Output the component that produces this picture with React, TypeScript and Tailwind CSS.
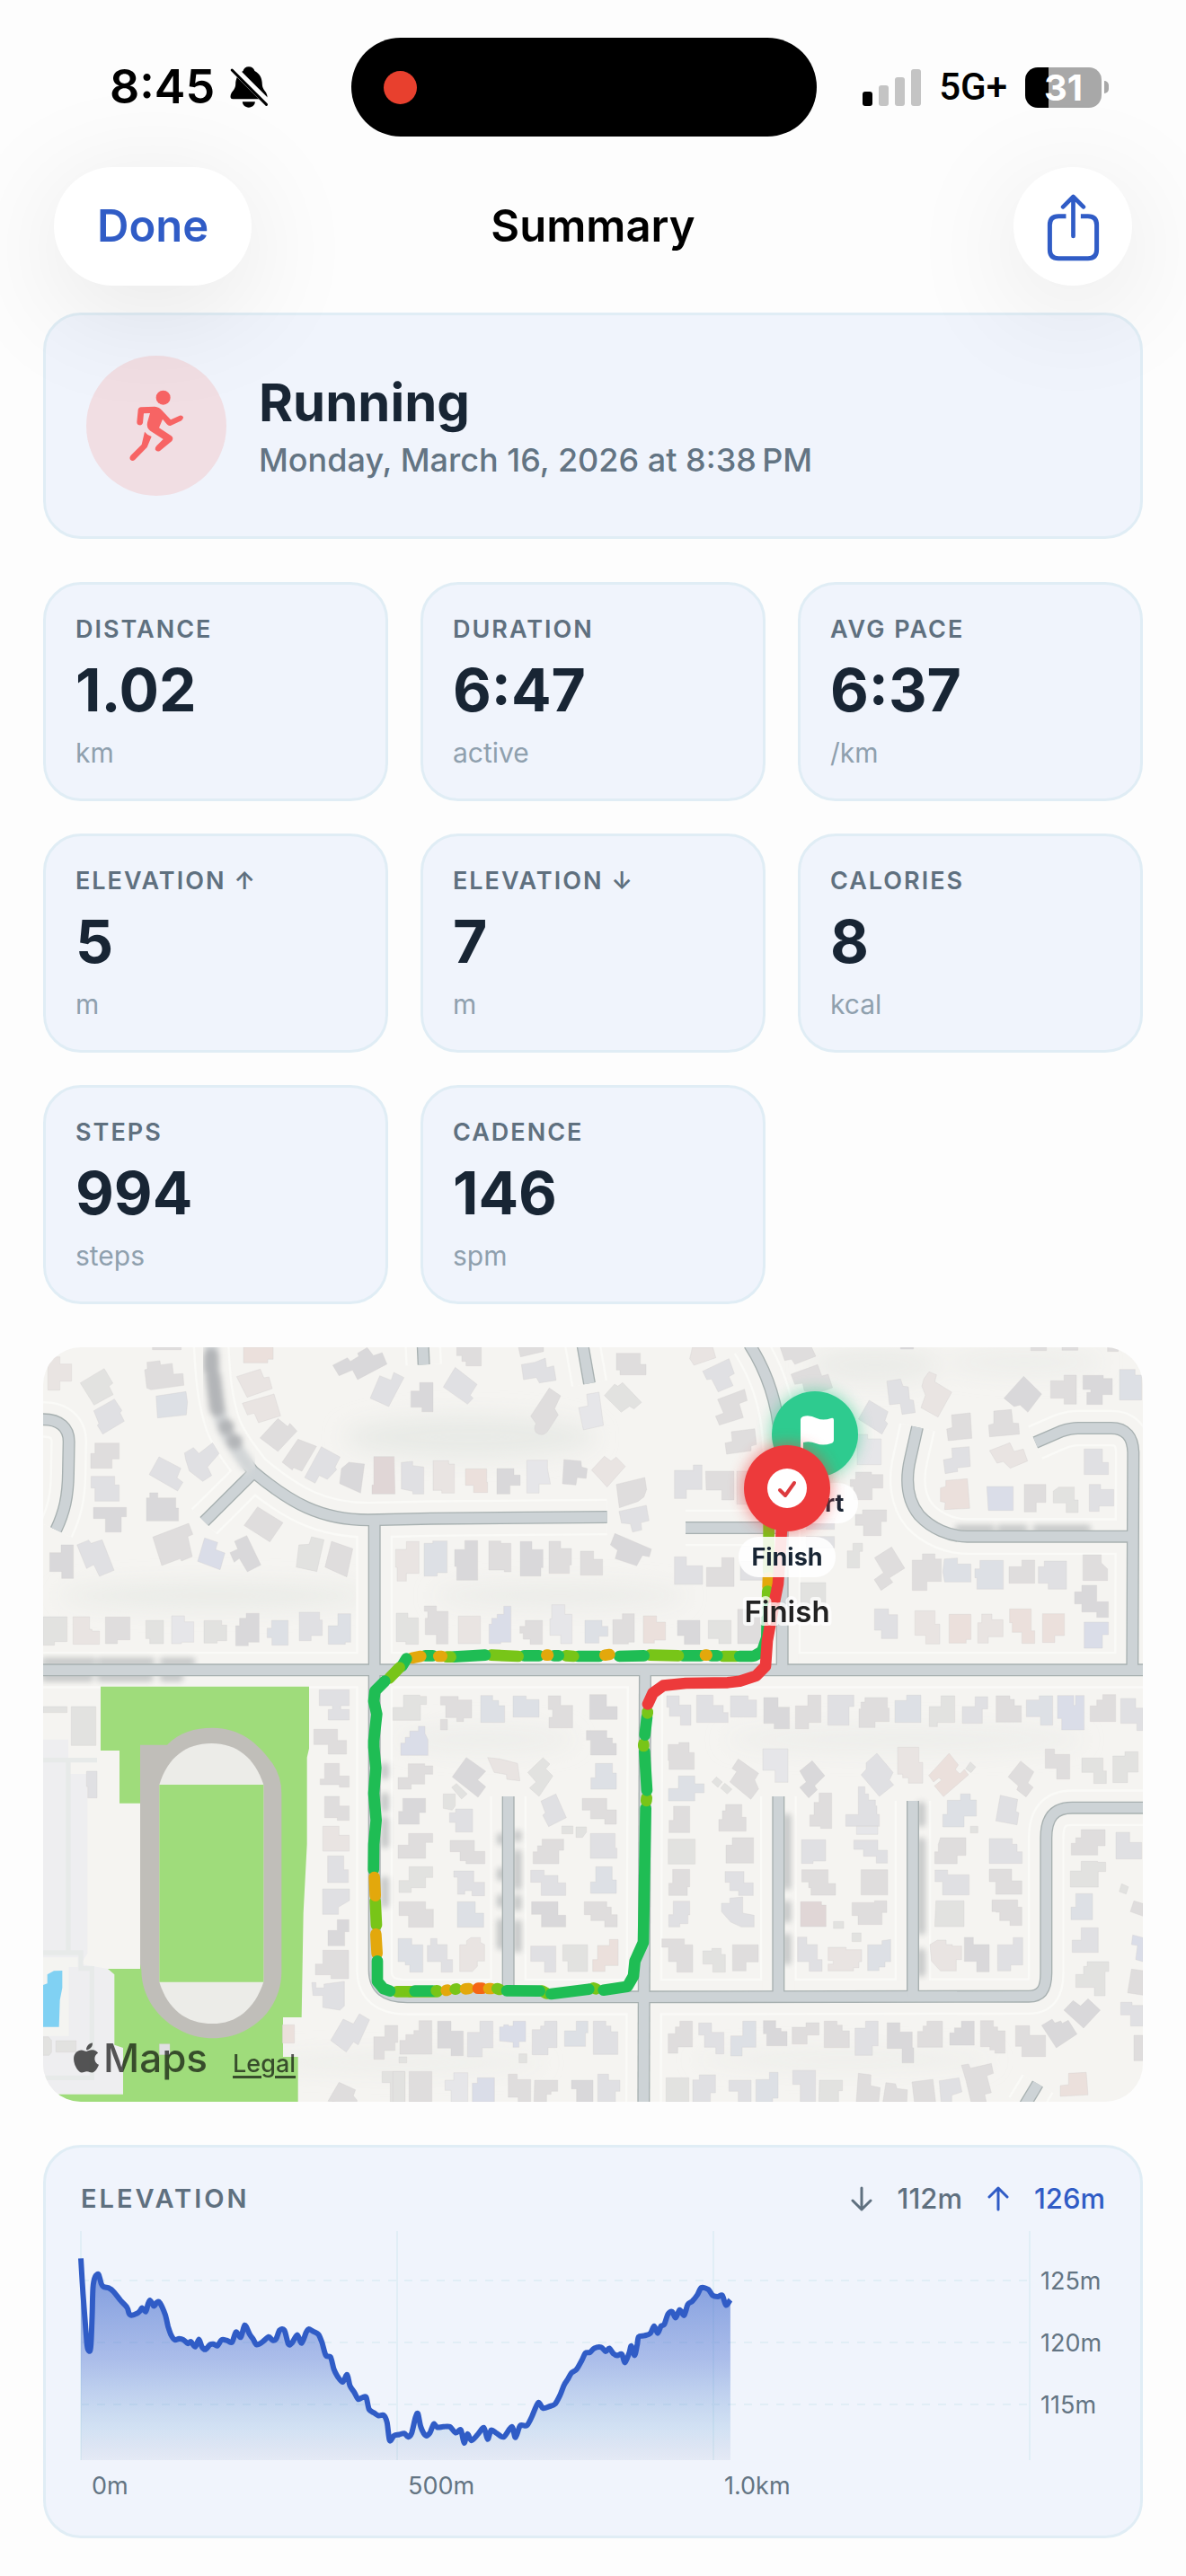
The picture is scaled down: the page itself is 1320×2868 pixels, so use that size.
import React from "react";
import { FaApple } from "react-icons/fa";

/* ---------- Icons ---------- */

function BellSlashIcon() {
  return (
    <svg viewBox="518 42 134 144" className="h-12 w-[45px]" aria-hidden="true">
      <path
        d="M583 46c10 0 17 5 20 14 17 9 25 24 25 45 0 18 16 24 17 40 0 6-3 9-8 9H530c-6 0-8-3-8-9 1-16 17-22 17-40 0-21 9-36 25-45 3-9 9-14 19-14z"
        fill="#000"
      />
      <path d="M562 163h42c0 11-9 19-21 19s-21-8-21-19z" fill="#000" />
      <path d="M530 50L650 170" stroke="#fdfdfd" strokeWidth="24" />
      <path d="M527 57L642 172" stroke="#000" strokeWidth="9" strokeLinecap="round" />
    </svg>
  );
}

function SignalIcon() {
  return (
    <svg viewBox="0 0 65 42" className="h-[42px] w-[65px]" aria-hidden="true">
      <rect x="0" y="26" width="11" height="16" rx="3" fill="#000" />
      <rect x="18" y="19" width="11" height="23" rx="3" fill="#c4c4c4" />
      <rect x="36" y="10" width="11" height="32" rx="3" fill="#c4c4c4" />
      <rect x="54" y="1" width="11" height="41" rx="3" fill="#c4c4c4" />
    </svg>
  );
}

function ShareIcon() {
  return (
    <svg viewBox="850 552 182 236" className="h-[79px] w-[61px]" fill="none" stroke="#305cc6" aria-hidden="true">
      <path d="M917 635H892Q863 635 863 664V746Q863 775 892 775H990Q1019 775 1019 746V664Q1019 635 990 635H966" strokeWidth="15" />
      <path d="M941 572V701M907 604L941 570L975 604" strokeWidth="14" strokeLinecap="round" strokeLinejoin="round" />
    </svg>
  );
}

function RunnerIcon() {
  return (
    <svg viewBox="190 1120 189 246" className="h-[82px] w-[63px]" fill="#f76464" aria-hidden="true">
      <circle cx="306" cy="1149" r="24" />
      <path d="M232 1181L278 1179Q292 1180 302 1192L331 1223L361 1209Q369 1207 373 1214Q374 1221 367 1226L332 1242Q324 1245 318 1238L304 1221L292 1250L333 1277Q342 1284 335 1294L295 1327Q284 1332 279 1322Q278 1316 284 1310L306 1288L263 1260Q249 1250 253 1232L262 1201L241 1202L238 1234Q235 1243 226 1241Q218 1240 218 1230L222 1190Q223 1182 232 1181Z" />
      <path d="M244 1263Q252 1274 267 1279L252 1315L211 1357Q203 1363 196 1356Q192 1349 198 1342L234 1306Z" />
    </svg>
  );
}

function RangeArrow({ up }: { up?: boolean }) {
  return (
    <svg
      viewBox="0 0 24 28"
      className="h-7 w-6"
      fill="none"
      stroke="currentColor"
      strokeWidth="3"
      strokeLinecap="round"
      strokeLinejoin="round"
      aria-hidden="true"
    >
      {up ? <path d="M12 26V2M2 12L12 2L22 12" /> : <path d="M12 2V26M2 16L12 26L22 16" />}
    </svg>
  );
}

/* ---------- Header ---------- */

function StatusBar() {
  return (
    <div className="flex items-center justify-between pt-[42px] pr-[86px] pl-[122px]">
      <div className="flex w-[218px] items-center gap-4">
        <span className="text-[52px] leading-[60px] font-semibold text-black">8:45</span>
        <BellSlashIcon />
      </div>
      <div className="flex h-[110px] w-[518px] items-center rounded-full bg-black pl-9">
        <span className="h-[37px] w-[37px] rounded-full bg-[#e8402e]" />
      </div>
      <div className="flex items-center">
        <SignalIcon />
        <span className="ml-5 font-[Roboto] text-[42px] leading-[48px] font-medium text-black">5G+</span>
        <div className="ml-5 flex h-[45px] w-[85px] items-center justify-center rounded-[14px] bg-[linear-gradient(to_right,#000_31%,#a8a8a8_31%)]">
          <span className="text-[40px] leading-[45px] font-bold text-white">31</span>
        </div>
        <span className="ml-[3px] h-[14px] w-[5px] rounded-r-full bg-[#a8a8a8]" />
      </div>
    </div>
  );
}

function Header() {
  return (
    <header className="relative z-10">
      <StatusBar />
      <nav className="mt-[34px] flex items-center justify-between px-[60px]">
        <div className="flex flex-1">
          <button
            type="button"
            className="h-[132px] rounded-full bg-white px-12 text-[49px] leading-[60px] font-semibold text-[#305cc6] shadow-[0_24px_130px_rgba(0,0,0,0.10)]"
          >
            Done
          </button>
        </div>
        <h1 className="text-[49px] leading-[60px] font-semibold text-black">Summary</h1>
        <div className="flex flex-1 justify-end">
          <button
            type="button"
            aria-label="Share"
            className="flex h-[132px] w-[132px] items-center justify-center rounded-full bg-white shadow-[0_24px_130px_rgba(0,0,0,0.10)]"
          >
            <ShareIcon />
          </button>
        </div>
      </nav>
    </header>
  );
}

/* ---------- Stats ---------- */

const CARD = "border-[3px] border-[#e0edf5] bg-[#f0f4fc]";

function ActivityCard() {
  return (
    <section className={`${CARD} flex items-center gap-9 rounded-[42px] p-[45px]`}>
      <div className="flex h-[156px] w-[156px] shrink-0 items-center justify-center rounded-full bg-[#f1dee3]">
        <RunnerIcon />
      </div>
      <div>
        <h2 className="text-[58px] leading-[72px] font-bold text-[#182534]">Running</h2>
        <p className="mt-1 text-[36px] leading-[48px] font-medium text-[#637483]">Monday, March 16, 2026 at 8:38{"\u202f"}PM</p>
      </div>
    </section>
  );
}

const STATS = [
  { label: "DISTANCE", value: "1.02", unit: "km" },
  { label: "DURATION", value: "6:47", unit: "active" },
  { label: "AVG PACE", value: "6:37", unit: "/km" },
  { label: "ELEVATION ↑", value: "5", unit: "m" },
  { label: "ELEVATION ↓", value: "7", unit: "m" },
  { label: "CALORIES", value: "8", unit: "kcal" },
  { label: "STEPS", value: "994", unit: "steps" },
  { label: "CADENCE", value: "146", unit: "spm" },
];

function StatGrid() {
  return (
    <dl className="grid grid-cols-3 gap-9">
      {STATS.map((s) => (
        <div key={s.label} className={`${CARD} rounded-[42px] px-[33px] pt-8 pb-[31px]`}>
          <dt className="text-[27px] leading-[36px] font-semibold tracking-[2px] text-[#5f707f]">{s.label}</dt>
          <dd className="mt-[9px] text-[66px] leading-[80px] font-bold text-[#182534]">{s.value}</dd>
          <dd className="mt-[10px] text-[30px] leading-[40px] text-[#8fa0ae]">{s.unit}</dd>
        </div>
      ))}
    </dl>
  );
}

/* ---------- Map ---------- */

const TINT: Record<string, string> = {
  g: "#dfdddd",
  l: "#e0e0e3",
  d: "#d9d8da",
  e: "#e2e2e0",
  p: "#e9e4e2",
  b: "#dde0e5",
  v: "#dadde8",
  w: "#e6e6e9",
  r: "#ebe0dc",
  k: "#e0d6d6",
};

/* Building footprints, grouped by map tile: "<tint><path>". */
const TILES: { x: number; y: number; houses: string[] }[] = [
  {
    x: 0,
    y: 0,
    houses: [
      "pM40,62H80V86H119V143H80V173H40Z",
      "eM148,149L228,101L257,150L244,160L258,188L194,223Z",
      "lM193,242L262,203L287,241L281,249L295,277L223,320L205,291L210,284Z",
      "gM371,80L414,75L416,89L455,84L459,120L491,118L494,157L384,172L370,166L363,105L372,103Z",
      "bM401,193L501,178L506,214L502,256L406,266Z",
      "gM389,30H485V38H389Z",
      "rM693,30H792V70H774V82H693Z",
      "pM670,128L749,103L761,132L778,129L789,168L705,197Z",
      "pM689,217L795,186L817,259L743,282L729,250L706,256Z",
      "gM748,333L808,268L841,295L848,284L872,310L808,378Z",
      "gM822,414L875,337L937,361L888,444L860,432L856,440Z",
      "lM897,465L953,362L1016,397L999,430L1004,439L973,471L946,458L932,484Z",
      "dM1020,435L1045,414L1097,420L1084,517L1014,485Z",
      "kM1128,395H1196L1199,520H1122V490H1128Z",
      "lM1220,415L1258,411V425L1295,430V520H1258V511L1220,503Z",
      "dM991,90L1040,65L1050,77L1078,60L1074,50L1106,31L1127,58L1156,48L1172,86L1074,138L1057,106L1012,125Z",
      "lM1116,200L1148,125L1186,140L1195,114L1229,131L1178,228Z",
      "gM197,350H278V403H254V434H183V385H197Z",
      "lM184,461H263V490H278V544H197V500H184Z",
      "dM192,565H302V596H285V647H232V602H192Z",
      "lM378,455L411,396L484,434L471,466L491,481L473,510Z",
      "lM496,383L526,365L544,385L590,349L612,385L573,430L587,458L557,478L512,443L500,405Z",
      "dM369,533H380V516H407V533H467V567H476V610H369Z",
      "gM390,664L510,618L524,655L507,662L522,729L486,744L482,736L420,759Z",
      "vM563,667L607,682L600,706L631,717L615,773L540,745Z",
      "dM648,716L674,704L663,678L704,659L751,757L706,780L679,735L662,748Z",
      "gM740,563L825,616L781,680L695,625Z",
      "lM137,690L176,674L184,685L221,673L261,775L212,795L193,756L169,769Z",
      "dM46,716H84V690H125V802H86V779H46Z",
      "eM878,690L912,688L920,663L962,673L938,779L869,764Z",
      "gM987,678L1058,703L1038,797L965,764Z",
      "eM24,930H104V1013H62V1025H24Z",
      "pM124,930H179V972H187V978H212V1022H124Z",
      "gM232,931H314V1007H272V1020H232Z",
      "eM367,942H426V1020H380V1003H367Z",
      "wM453,927H496V947H527V1015H486V1020H453Z",
      "eM561,943H620V958H637V1010H605V1018H561Z",
      "dM667,960H680V935H702V919H745V1015H709V1027H667Z",
      "bM772,968H787V942H842V1025H788V1000H772Z",
      "lM879,915H947V941H956V993H919V1010H879Z",
      "bM976,960H1008V920H1051V1015H1033V1022H976Z",
      "pM1201,705H1237V679H1279V785H1237V811H1206V765H1201Z",
      "eM24,1230H104V1250H24Z",
      "eM118,1230H200V1360H118Z",
      "lM946,1174H1046V1227H1018V1240H1046V1275H976V1240H990V1227H946Z",
    ],
  },
  {
    x: 1200,
    y: 0,
    houses: [
      "gM205,30H287V92H236V77H222V58H205Z",
      "dM52,176H81V148H126V245H89V230H52Z",
      "lM160,163L200,97L273,154L250,190L260,200L241,220Z",
      "gM411,30H495V44L418,62Z",
      "lM421,88L466,80L501,66L505,98L529,92L537,140L481,149L471,131L428,138Z",
      "gM514,166L552,192L532,235L544,256L507,313Q490,330 470,315Q460,300 470,285L452,260Z",
      "wM612,232L643,226L639,187L680,180L695,291L628,306Z",
      "eM698,191L732,153L743,160L759,148L822,214L797,236L782,227L754,247Z",
      "gM738,50H818V87H837V122H750V106H738Z",
      "pM983,68L992,30H1060L1070,65L997,90Z",
      "lM1026,110L1114,68L1132,118L1114,128L1128,158L1078,179L1056,136L1040,138Z",
      "gM1076,204L1166,170L1175,208L1148,218L1162,265L1082,290L1069,260L1096,250Z",
      "gM1101,350L1125,345L1122,312L1200,302L1206,355L1188,360V376L1106,387Z",
      "pM126,409H178V420H197V517H155V508H126Z",
      "rM234,436H305V481H308V515H261V491H234Z",
      "dM339,435H396V457H417V491H383V520H339Z",
      "wM439,407H508V435L518,487H480V517H439Z",
      "dM563,405L620,410L622,430L641,435L637,468L607,465L603,490L558,486Z",
      "pM655,440L698,394L720,410L738,397L768,428L707,497L683,470Z",
      "gM738,488L833,465L839,505L830,530L810,545L748,566Z",
      "lM747,578L838,558L847,609L820,616L823,640L792,647L785,620L755,617Z",
      "dM733,652L855,704L848,730L825,725L806,760L734,736L742,708L718,690Z",
      "lM932,441H995V423H1024V505H972V535H932Z",
      "gM1036,444H1131V540H1090V507H1038Z",
      "pM1140,444H1200V554H1140Z",
      "bM96,685H125V677H173V783H140V794H96Z",
      "dM198,706H232V676H275V808H205V762H198Z",
      "gM312,677H352V685H386V780H364V774H312Z",
      "dM417,679H456V706H493V766H486V794H417Z",
      "gM513,678H552V702H588V757H581V785H513Z",
      "gM618,711H662V738H692V791H618Z",
      "eM3,918H42V934H77V1022H35V1013H3Z",
      "gM97,894H137V912H176V1021H137V990H100V935H108V912H97Z",
      "pM210,928H284V1020H210Z",
      "vM313,955H322V935H340V922H362V895H386V1015H352V1020H313Z",
      "gM416,962H434V942H491V1022H450V1005H427V985H416Z",
      "wM522,890H566V922H590V1020H552V992H516V937H522Z",
      "bM633,942H690V962H710V995H680V1018H633Z",
      "gM726,940H758V920H798V1015H778V1021H726Z",
      "rM828,927H872V948H902V1008H865V1018H828Z",
      "dM942,942H1017V1022H965V993H942Z",
      "eM1045,942H1121V1020H1080V1003H1045Z",
      "gM1143,905H1225V1020H1143Z",
      "lM932,730H972V760H1026V822H932Z",
      "gM1039,765H1090V733H1131V829H1039Z",
      "lM1152,745H1235V808H1152Z",
      "eM27,1192H82V1196H104V1223H84V1276H-8V1233H27Z",
      "gM151,1196H210V1208H255V1268H228V1280H205V1267H168V1225H151Z",
      "gM151,1273H174V1308H151Z",
      "bM285,1193H325V1210H345V1227H365V1283H285Z",
      "bM393,1195H437V1207H480V1265H393Z",
      "gM511,1194H552V1226H592V1301H513V1266H525V1240H511Z",
      "dM649,1190H705V1230H741V1273H649Z",
      "lM906,1194H948V1225H987V1292H952V1262H915V1232H906Z",
      "lM1006,1192H1061V1226H1095V1250H1111V1283H1006Z",
      "lM1119,1194H1178V1208H1206V1265H1119Z",
      "dM1230,1200H1278V1232H1316V1304H1265V1286H1230Z",
    ],
  },
  {
    x: 2430,
    y: 0,
    houses: [
      "gM106,1228H147V1192H191V1283H150V1304H106Z",
      "lM214,1192H301V1230H285V1292H214Z",
      "gM325,1215H338V1200H413V1235H419V1280H372V1300H318V1238H325Z",
      "bM438,1210H477V1192H525V1283H438Z",
      "eM553,1230H592V1194H638V1283H580V1297H553Z",
      "lM663,1230H706V1197H748V1238H730V1286H663Z",
      "gM776,1194H822V1206H837V1227H860V1282H776Z",
      "bM877,1208H920V1194H965V1292H924V1264H877Z",
      "vM981,1193H1035V1226H1041V1193H1070V1308H995V1270H981Z",
      "gM1090,1228H1112V1208H1132V1190H1175V1280H1090Z",
      "lM1192,1203H1242V1235H1266V1310H1246V1286H1192Z",
      "gM55,30H160L174,60L104,87L93,70L70,74Z",
      "gM91,120L180,88L194,126L215,120L230,165L160,190L135,175L130,150L104,154Z",
      "lM352,207L415,245L405,275L414,285L395,320L316,270Z",
      "wM312,321H347V336H392V422H312Z",
      "gM289,472H307V447H360V455H398V500H362V539H300V495H289Z",
      "gM306,588H330V573H410V612H392V659H333V625H306Z",
      "eM298,685H330V712H320V767H279V710H298Z",
      "gM370,733L427,697L471,768L420,800L431,815L392,842L369,806L400,783Z",
      "eM123,816H207V900H123Z",
      "lM411,143L457,136L465,160L483,162L487,205L500,207L506,248L462,254L456,218L420,222Z",
      "pM535,135L552,112L577,122L571,145L628,180L582,263L525,232L540,190L528,160Z",
      "gM627,256L690,249L695,334L616,342L611,303L630,298Z",
      "lM628,367L686,362L690,428L646,433L648,445L606,452L600,406L630,400Z",
      "rM608,475L680,469L688,568L604,572L606,548L590,545V500L608,495Z",
      "dM868,127L928,186L882,247L856,223L836,228L802,200Z",
      "gM768,243L827,238L832,283L851,284L854,320L754,329L751,290L768,285Z",
      "pM754,375L822,349L836,378L867,370L881,410L823,434L800,412L779,417Z",
      "gM958,142H1003V123H1044V220H1003V200H958Z",
      "dM1066,124H1134V134H1164V188H1131V221H1079V181H1092V171H1066Z",
      "bM1188,104H1240V123H1262V206H1188Z",
      "lM1070,370H1131V415H1151V455H1070Z",
      "vM745,495H833V575H750Z",
      "gM870,488H942V548H910V580H870Z",
      "eM967,510L985,497H1037V540H1050V582H1010V550H967Z",
      "lM1087,488H1125V505H1169V560H1120V578H1087Z",
      "gM496,741H530V720H572V737H593V812H545V842H496Z",
      "bM603,737L647,734V754H692V814H604L598,780Z",
      "bM705,770H722V742H800V838H712V800H705Z",
      "gM819,763H862V741H905V818H819Z",
      "lM917,763H937V744H1011V838H950V818H917Z",
      "gM1066,723H1127V750L1148,770V809H1066Z",
      "dM1062,825H1112V880H1151V932H1112V914H1062V887H1038V847H1062Z",
      "lM370,904H417V923H447V1003H393V975H370Z",
      "pM505,910H572V955H588V1021H541V992H505Z",
      "rM619,922H692V1006H676V1018H619Z",
      "pM728,921H762V940H799V997H750V1018H715V950H728Z",
      "rM821,904H893V977H905V1019H862V982H830V950H821Z",
      "rM931,920H1004V993H972V1016H931Z",
      "vM1070,948H1151V990H1131V1035H1070Z",
      "gM892,30H944V41H892Z",
      "gM996,30H1049V40H996Z",
      "gM1148,30H1184V44H1148Z",
      "dM457,30H500V36H457Z",
      "lM142,600H236V638H142Z",
      "lM142,662H236V700H142Z",
    ],
  },
  {
    x: 0,
    y: 1260,
    houses: [
      "gM928,46H1007V83H1037V129H976V97H928Z",
      "gM964,160H1013V202H1046V239H1013V231H949V212H964Z",
      "gM964,270H1013V302H1046V350H1006V341H964Z",
      "pM958,370H1012V400H1046V453H958Z",
      "lM974,469H1028V515H1043V558H974Z",
      "lM957,579H1047V618L1010,640V664H957Z",
      "dM1006,682H1045V722H1031V769H975V718H1006Z",
      "gM958,784H1044V879H985V866H933V830H958Z",
      "lM921,892H935V910H962V897L1030,888V970L1015,984L958,975V935H925Z",
      "lM1026,1014L1060,1030L1080,996L1114,1016L1076,1100L1060,1090L1036,1124L984,1085Z",
      "gM1012,1225L1067,1250L1060,1270L1072,1285V1300L975,1288Z",
      "gM1165,1035H1208V1092H1199V1119H1163V1148H1128V1073H1165Z",
      "eM1156,1189H1232V1290H1183V1226H1156Z",
      "rM823,1033H863V1094H823Z",
      "lM169,186H204V275H173V237H169Z",
      "eM24,1073L42,1073L52,1085V1125L44,1135H24Z",
      "eM67,1086H134V1124H67Z",
      "lM412,1097H447V1133H412Z",
    ],
  },
  {
    x: 1200,
    y: 1260,
    houses: [
      "vM18,92H33V73H48V52H77V36H99V60L109,80V133H18Z",
      "gM43,161H98V168H125V196H98V229H53V246H9V207H43Z",
      "dM25,277H101V324H80V363H11V320H25Z",
      "gM44,394H125V424H101V477H9V433H44Z",
      "eM46,505H125V541H101V575H53V591H12V551H46Z",
      "gM12,622H101V647H127V707H44V668H12Z",
      "bM9,745H55V766H92V857H48V833H33V822H9Z",
      "lM118,745H139V765H173V815H191V857H153V822H107V768H118Z",
      "pM238,752L252,742H284V758L298,765V820H274V838L257,855H215V766H238Z",
      "dM190,205L237,140L302,186L275,215L302,238L276,273Z",
      "pM308,140L350,145L408,160L416,218L372,213L371,197L330,190Z",
      "eM442,190L493,141L516,162L502,178L526,202L480,270L448,242L470,222Z",
      "lM486,286L536,262L571,341L512,371L492,333L501,325Z",
      "eM188,240L204,227L240,262L221,279Z",
      "eM160,262H200V302L190,316L160,310Z",
      "lM201,312H258V389H201V357H181V325H201Z",
      "gM183,417H264V454H299V495H236V485H216V455H183Z",
      "lM195,519H262V557H298V602H256V585H232V597H208V540H195Z",
      "bM207,622H267V660H295V707H207Z",
      "eM556,369H593V395H556Z",
      "eM603,372H638V390L625,407H603Z",
      "gM490,413H562V450H546V495H460V455H475V435H490Z",
      "lM452,517H497V534H543V559H569V601H487V557H452Z",
      "dM455,622H543V667H569V706H488V664H455Z",
      "lM452,770H536V857H498V821H452Z",
      "eM559,766H642V855H576V820H559Z",
      "rM715,748H744V835H700V855H659V815H675V768H715Z",
      "dM638,50H706V75H725V93H738V132H652V82H638Z",
      "bM668,160H725V192H738V246H653V208H668Z",
      "gM624,277H706V315H738V363H699V345H652V316H624Z",
      "lM651,394H734V443H740V477H651Z",
      "bM669,505H724V549H738V594H652V556H669Z",
      "gM631,622H706V640H721V665H741V706H699V685H653V665H631Z",
      "gM911,97H947V90H981V124H998V180H914V150H911Z",
      "bM945,202H1000V228H1031V258H1000V285H912V244H945Z",
      "gM929,303H983V391H914V350H929Z",
      "eM911,413H1001V496H911Z",
      "gM926,514H983V572H975V601H913V560H926Z",
      "lM928,620H983V666H977V695H950V706H913V665H928Z",
      "gM890,746H965V766H993V857H940V822H912V774H890Z",
      "eM1057,778H1088V798H1102V857H1060V830H1027V786H1057Z",
      "gM1126,766H1212V823H1171V853H1126Z",
      "wM1227,111H1311V223H1268V183H1227Z",
      "gM1145,145L1213,193L1200,215L1213,245L1187,280L1117,222L1140,187L1124,177Z",
      "eM1072,205L1092,222L1077,240L1057,222Z",
      "eM1100,226L1124,246L1108,262L1086,242Z",
      "gM1103,297H1157V340H1171V386H1080V347H1092V318H1103Z",
      "gM1125,408H1196V493H1104V433H1125Z",
      "lM1101,521H1164V559H1195V601H1146V585H1117V557H1101Z",
      "lM1117,610L1160,606V660L1198,667V706H1155L1120,690L1089,655V627H1117Z",
      "gM79,1019H122V1131H15V1085H35V1066H62V1052H79Z",
      "dM141,1021H186V1054H227V1136H186V1111H141Z",
      "lM282,1021H326V1110H290V1140H241V1058H282Z",
      "vM348,1040H362V1033H378V1037H393V1021H435V1089H413V1108H393V1091L348,1087Z",
      "lM498,1021H540V1109H510V1133H457V1049H485V1037H498Z",
      "bM604,1021H643V1060H635V1105H565V1053H604Z",
      "lM661,1021H703V1037H720V1056H743V1132H661Z",
      "eM413,1130H439V1160H413Z",
      "eM12,1140H38V1160H12Z",
      "gM46,1189H122V1290H46Z",
      "eM-8,1189H32V1290H-8Z",
      "wM195,1193H242V1290H186V1252H166V1218H195Z",
      "vM274,1210H331V1290H257V1228H274Z",
      "gM377,1198H407V1216H452V1290H410V1275H377Z",
      "gM465,1218H542V1255H520V1265H505V1290H463Z",
      "dM588,1218H660V1290H605V1247H588Z",
      "lM676,1198H712V1218H750V1255H735V1290H676Z",
      "gM950,1021H992V1107H943V1128H911V1063H935V1040H950Z",
      "lM1013,1027H1056V1058H1097V1130H1070V1108H1032V1067H1013Z",
      "bM1160,1021H1204V1108H1158V1137H1120V1070H1160Z",
      "eM904,1210H980V1290H904Z",
      "lM1015,1200H1069V1260H1052V1290H993V1217H1015Z",
      "lM1114,1218H1188V1290H1145V1255H1114Z",
      "bM1249,1192H1278V1278H1260V1290H1204V1216H1249Z",
      "dM1229,1019H1270V1045H1288V1055H1308V1103H1240V1063H1229Z",
    ],
  },
  {
    x: 2430,
    y: 1260,
    houses: [
      "dM162,151L204,201L170,235L179,248L150,275L120,240L142,222L120,185Z",
      "lM378,126L432,190L420,215L434,232L386,270L325,198L342,180V158Z",
      "pM447,106H518V157H531V226H483V208H464V196H447Z",
      "rM619,126L650,165L640,180L655,195L670,180L684,198L600,271L570,235L594,215L585,208L567,222L551,200Z",
      "eM690,155L708,172L692,191L674,178Z",
      "gM858,152L902,188L882,225L900,240L876,272L845,248L850,235L816,205Z",
      "gM940,112H971V130H1022V212H978V176H940Z",
      "eM1062,142H1133V185H1144V227H1102V190H1062Z",
      "eM1206,121H1250V189H1215V224H1166V135H1206Z",
      "gM185,259H227V377H190V370H154V332H168V290H185Z",
      "lM316,238H338V262H350V282H373V302H378V330H386V370H274V331H316Z",
      "wM310,370H381V397H310Z",
      "lM126,415H207V486H165V494H126Z",
      "lM301,416H381V450H413V493H376V470H333V447H301Z",
      "gM127,515H215V561H240V600H158V575H150V556H127Z",
      "gM325,515H414V599H325Z",
      "kM123,622H193V633H208V705H123Z",
      "gM295,625H370V619H411V658H395V698H315V668H295Z",
      "eM233,688H267V711H233Z",
      "eM295,726H325V755H295Z",
      "lM113,740H144V765H179V815H195V854H152V822H113Z",
      "pM215,774H275V782H327V822H318V842H300V853H215V830H232V818H215Z",
      "bM395,752L424,748V822H405V840H385V852H347V766H395Z",
      "bM657,262H690V282H710V336H669V372H598V330H613V283H657Z",
      "eM690,370H715V392H690Z",
      "lM790,266L848,280L842,320L852,325L846,365L775,352Z",
      "gM590,408H675V467H646V495H571V455H583V430Z",
      "lM753,411H830V430H846V455H863V494H753Z",
      "lM572,516H614V532H686V599H597V555H572Z",
      "gM753,513H828V552H862V597H775V555H753Z",
      "eM575,619H669V705H571Z",
      "gM762,616H848V640H862V701H822V685H788V657H775V655H762Z",
      "pM555,765L580,750H609V765H630V770H661V815H643V853H590L560,820Z",
      "dM670,741H700V765H753V856H711V821H670Z",
      "lM833,742H865V833H825V853H781V766H833Z",
      "gM1060,381H1140V435H1115V466H1027V427H1042V408H1060Z",
      "lM1176,390H1222V424H1262V479H1176Z",
      "eM1060,487H1115V490H1142V521H1117V573H1024V519H1060Z",
      "bM1042,595H1098V682H1026V640H1042Z",
      "lM1060,709H1117V791H1030V750H1060Z",
      "eM1080,822H1152V855H1140V936H1104V908H1042V865H1068V838H1080Z",
      "eM1195,562L1218,572L1210,596L1187,588Z",
      "gM1236,619L1266,628V670L1224,655Z",
      "vM1232,733L1266,742V822L1242,815L1248,768L1228,765Z",
      "gM1228,847L1266,852V934L1215,926Z",
      "lM1192,958H1230V968H1266V1037H1225V1000H1192Z",
      "gM1236,1068H1266V1153H1236Z",
      "dM1033,952L1058,970L1083,946L1124,984L1068,1044L1002,984Z",
      "dM928,1035L963,1014L972,1027L992,1020L997,1028L1017,1018L1046,1064L977,1110Z",
      "gM95,1041H141V1026H185V1067H145V1097H95Z",
      "gM202,1021H245V1034H262V1053H286V1109H202Z",
      "lM340,1021H382V1103H363V1135H305V1044H340Z",
      "dM412,1026H455V1057H496V1110H501V1160H462V1112H412Z",
      "gM545,1021H597V1108H514V1055H532V1037H545Z",
      "dM660,1021H703V1101H621V1060H637V1043H660Z",
      "gM724,1019H767V1040H781V1053H806V1128H772V1117H755V1106H724Z",
      "gM841,1036H888V1068H941V1139H862V1105H841Z",
      "lM97,1185H173V1290H122V1232H97Z",
      "eM186,1218H263V1253H250V1290H184Z",
      "gM316,1195L358,1200L357,1236L389,1243L384,1290H309Z",
      "gM408,1226L440,1230L445,1246L480,1250L478,1290H398Z",
      "gM495,1224L565,1215L574,1290H503Z",
      "lM586,1220L652,1210L662,1257L628,1268V1290H592Z",
      "gM660,1168L684,1164L690,1178L760,1162L767,1195L745,1203L760,1260L738,1265L743,1290H692L675,1218Z",
      "rM1018,1195L1077,1192L1083,1267L990,1272V1236L1018,1233Z",
    ],
  },
];

const ROADS = [
  "M0,271H24C80,271 110,300 110,345L108,450C107,530 95,580 67,640",
  "M585,20C590,120 595,200 625,290C650,350 690,400 725,445C850,550 950,607 1110,607L1320,602L1907,597",
  "M725,450L562,612",
  "M1130,607V2110C1130,2170 1165,2200 1240,2200H2029L3315,2198C3360,2198 3373,2170 3373,2120V1670C3373,1600 3400,1568 3460,1568H3720",
  "M0,1108H3720",
  "M1292,20L1295,88",
  "M1825,20L1848,151",
  "M2382,20C2440,110 2475,210 2484,330S2492,500 2492,620V1108",
  "M2169,633H2492",
  "M2943,297L2920,400C2903,470 2908,540 2950,592C2990,635 3050,662 3110,662H3662",
  "M3337,348L3425,310Q3455,300 3480,300H3590C3640,300 3662,330 3664,380L3661,1108",
  "M2034,1108L2029,2570",
  "M1577,1530V2200",
  "M2479,1530V2200",
  "M2928,1545V2200",
  "M3345,2490L3300,2565",
];

/* Blurred-out street names */
const SMUDGES = [
  "M30,1080H190M215,1080H385M425,1080H520M30,1133H180M215,1133H380M425,1133H480",
  "M3080,636H3190M3220,636H3300M3340,636H3510",
  "M1608,1655V1670M1608,1720V1830M1608,1870V1900M1608,1955V2040M1552,1665V1680M1552,1780V1800M1552,1870V1890M1552,1950V2030",
  "M2508,1600V1830M2508,1890V1940M2508,2000V2080",
  "M2956,1560V1620M2956,1680V1980M2956,2050V2120",
  "M1165,1430V1460M1165,1530V1570M1165,1610V1690M1165,1810V1890",
];

const G = "#1fbd54";
const L = "#78c518";
const O = "#e3a80c";
const F = "#f56515";
const R = "#ed3a3b";

/* Route segments coloured by pace, in running order */
const ROUTE: [string, string][] = [
  [L, "2447,560 2447,650 2446,780"],
  [O, "2445,800 2444,830"],
  [L, "2443,845 2442,880"],
  [G, "2442,900 2440,1000 2425,1045 2400,1060"],
  [L, "2338,1062 2295,1062"],
  [G, "2390,1062 2350,1062"],
  [G, "2275,1060 2255,1060"],
  [G, "2220,1060 2160,1060"],
  [O, "2240,1058 2235,1058"],
  [L, "2145,1060 2050,1058"],
  [G, "2030,1060 1948,1062"],
  [G, "1880,1062 1810,1062"],
  [O, "1915,1056 1900,1058"],
  [L, "1795,1062 1770,1060"],
  [G, "1745,1060 1730,1060"],
  [G, "1680,1060 1630,1060"],
  [O, "1710,1058 1705,1058"],
  [L, "1610,1062 1520,1058"],
  [G, "1500,1058 1395,1064"],
  [L, "1385,1064 1372,1064"],
  [G, "1325,1060 1300,1060"],
  [O, "1355,1062 1345,1062"],
  [O, "1285,1062 1255,1068"],
  [G, "1237,1070 1222,1095"],
  [L, "1214,1100 1180,1135"],
  [G, "1165,1145 1132,1178 1128,1212 1138,1255 1128,1345 1128,1365 1135,1435 1128,1520 1136,1610 1128,1690 1127,1775"],
  [L, "1133,1880 1137,1960"],
  [O, "1130,1800 1133,1862"],
  [O, "1135,1990 1139,2055"],
  [L, "1205,2182 1250,2182"],
  [G, "1140,2080 1140,2148 1160,2172 1182,2180"],
  [L, "1340,2182 1250,2182"],
  [G, "1265,2180 1325,2180"],
  [L, "1337,2179 1340,2179"],
  [O, "1370,2178 1374,2177"],
  [L, "1400,2174 1404,2173"],
  [O, "1434,2173 1445,2172"],
  [F, "1476,2171 1490,2171"],
  [O, "1512,2172 1520,2172"],
  [L, "1540,2172 1548,2175"],
  [L, "1690,2180 1705,2188"],
  [G, "1572,2179 1682,2180"],
  [L, "1862,2170 1870,2173"],
  [G, "1720,2190 1846,2174"],
  [G, "1895,2177 1975,2165 1995,2130 2000,2080 2028,2018 2036,1570"],
  [L, "2038,1545 2039,1535"],
  [G, "2040,1510 2032,1380"],
  [L, "2029,1362 2029,1355"],
  [G, "2033,1325 2040,1265"],
  [L, "2042,1252 2042,1248"],
  [R, "2043,1222 2060,1185 2095,1160 2170,1152 2310,1150 2350,1145 2405,1127 2436,1095 2442,1010 2462,900 2478,820 2485,720 2492,600"],
];

function MapGround() {
  return (
    <g transform="translate(-8 -10) scale(0.333333)">
      <g filter="url(#terrain)" fill="#e8eae6">
        <ellipse cx="1450" cy="330" rx="420" ry="70" />
        <ellipse cx="600" cy="860" rx="520" ry="40" opacity="0.9" />
        <ellipse cx="1750" cy="860" rx="420" ry="38" opacity="0.8" />
        <ellipse cx="2800" cy="90" rx="220" ry="60" opacity="0.8" />
        <ellipse cx="3300" cy="80" rx="260" ry="40" opacity="0.6" />
        <ellipse cx="2900" cy="1340" rx="600" ry="40" opacity="0.6" />
        <ellipse cx="1500" cy="1340" rx="300" ry="40" opacity="0.6" />
        <ellipse cx="1200" cy="2420" rx="500" ry="30" opacity="0.5" />
        <ellipse cx="2700" cy="2410" rx="500" ry="30" opacity="0.5" />
      </g>

      <path d="M0,1340H108V1455H172V2055L150,2090L240,2106L262,2125V2360L291,2370V2525H0Z" fill="#eeeef0" />
      <path d="M0,2068H140V2100H110V2330H0Z" fill="#f4f4f1" />
      <path d="M0,1409H204M108,1409V2052M0,2052H150V2105H187V2470H0" fill="none" stroke="#e7eae9" strokeWidth="16" />
      <path
        d="M216,1163H912V1370L905,1400V1690L893,1920L887,2268H825V2400H875V2560H0V2525H291V2370L262,2360V2125L240,2106H348V1553H279V1377H216Z"
        fill="#9fdc7b"
      />
      <path
        d="M348,1358H438C480,1315 530,1301 590,1301C680,1301 740,1350 790,1420Q820,1465 820,1520V2120C816,2250 710,2338 590,2338C470,2338 352,2240 352,2110L348,2090Z"
        fill="#c0beb9"
      />
      <path d="M412,1491C440,1400 500,1353 586,1353C670,1353 730,1400 760,1491V2150C730,2240 670,2289 590,2289C500,2289 440,2240 412,2150Z" fill="#ecece8" />
      <path d="M412,1491H760V2150H412Z" fill="#9fdc7b" />
      <path d="M24,2160L38,2155V2125L60,2113L88,2112V2170L80,2210L77,2300H24Z" fill="#80d1f3" />

      <g fill="none" stroke="#fafaf7" strokeWidth="122">
        {ROADS.map((d) => (
          <path key={d} d={d} />
        ))}
      </g>
      <g fill="none" stroke="#f5f4f1" strokeWidth="108">
        {ROADS.map((d) => (
          <path key={d} d={d} />
        ))}
      </g>
      <path d="M216,1163H912V1260H216Z" fill="#9fdc7b" />

      {TILES.map((t) => (
        <g key={`${t.x}-${t.y}`} transform={`translate(${t.x} ${t.y})`}>
          {t.houses.map((h) => (
            <path key={h} d={h.slice(1)} fill={TINT[h[0]]} stroke="#cfcdcb" strokeOpacity="0.5" strokeWidth="2" />
          ))}
        </g>
      ))}

      <g fill="none" stroke="#8f9498" strokeWidth="26" strokeLinecap="round" opacity="0.48" filter="url(#smudge)">
        {SMUDGES.map((d) => (
          <path key={d} d={d} />
        ))}
      </g>
      <g fill="none" stroke="#a7b0b0" strokeWidth="42">
        {ROADS.map((d) => (
          <path key={d} d={d} />
        ))}
      </g>
      <g fill="none" stroke="#cdd3d6" strokeWidth="34">
        {ROADS.map((d) => (
          <path key={d} d={d} />
        ))}
      </g>
      <g filter="url(#smudge)" fill="none" strokeLinecap="round">
        <path d="M583,20C590,120 592,190 622,290C640,330 665,370 695,405" stroke="#f5f4f1" strokeWidth="84" />
        <path d="M585,20C590,120 595,200 625,290C650,350 685,390 705,420" stroke="#d2d5d7" strokeWidth="48" />
        <path d="M585,60V100M592,130L605,235M635,296H636M663,345H664" stroke="#b3b5b8" strokeWidth="54" />
      </g>
    </g>
  );
}

function Pins() {
  return (
    <g fontFamily="Inter, sans-serif" textAnchor="middle">
      <rect x="811" y="151" width="96" height="45" rx="22" fill="#fff" fillOpacity="0.9" />
      <text x="859" y="183" fontSize="27" fontWeight="700" fill="#182534">
        Start
      </text>
      <circle cx="859" cy="97" r="50" fill="#2ecb8f" opacity="0.5" filter="url(#glow)" />
      <circle cx="859" cy="97" r="48" fill="#2ecb8f" />
      <path d="M843 121V81Q843 78 846 77Q853 75 861 79Q868 82 877 79Q880 78 880 81V103Q880 106 877 107Q868 110 860 107Q853 104 846 106V121Z" fill="#fff" />

      <circle cx="828" cy="157" r="50" fill="#ed3a3b" opacity="0.5" filter="url(#glow)" />
      <circle cx="828" cy="157" r="48" fill="#ed3a3b" />
      <circle cx="828" cy="157" r="22" fill="#fff" />
      <path d="M820 159L826 165L836 151" fill="none" stroke="#dd3b3f" strokeWidth="4" strokeLinecap="round" strokeLinejoin="round" />

      <rect x="774" y="211" width="108" height="45" rx="22" fill="#fff" fillOpacity="0.88" />
      <text x="828" y="243" fontSize="27" fontWeight="700" fill="#182534">
        Finish
      </text>
      <text
        x="828"
        y="306"
        fontSize="33"
        fontWeight="600"
        fill="#222"
        stroke="#fff"
        strokeOpacity="0.75"
        strokeWidth="8"
        strokeLinejoin="round"
        paintOrder="stroke"
      >
        Finish
      </text>
    </g>
  );
}

function RouteMap() {
  return (
    <section className="relative overflow-hidden rounded-[42px] bg-[#f5f4f1]" aria-label="Route map">
      <svg viewBox="0 0 1224 840" className="block w-full" role="img" aria-label="Running route">
        <defs>
          <filter id="terrain" x="-20%" y="-50%" width="140%" height="200%">
            <feGaussianBlur stdDeviation="36" />
          </filter>
          <filter id="smudge" x="-20%" y="-20%" width="140%" height="140%">
            <feGaussianBlur stdDeviation="9" />
          </filter>
          <filter id="glow" x="-50%" y="-50%" width="200%" height="200%">
            <feGaussianBlur stdDeviation="8" />
          </filter>
        </defs>
        <MapGround />
        <g transform="translate(-8 -10) scale(0.333333)" fill="none" strokeWidth="38" strokeLinecap="round" strokeLinejoin="round">
          {ROUTE.map(([c, p], i) => (
            <polyline key={i} points={p} stroke={c} />
          ))}
        </g>
        <Pins />
      </svg>
      <div className="absolute bottom-[22px] left-[33px] flex items-baseline text-black/65">
        <FaApple className="h-[38px] w-[30px] self-center" aria-hidden="true" />
        <span className="ml-1 text-[44px] leading-[54px] font-medium">Maps</span>
        <a href="#legal" className="ml-7 text-[27px] leading-[36px] font-medium underline decoration-[3px] underline-offset-4">
          Legal
        </a>
      </div>
    </section>
  );
}

/* ---------- Elevation ---------- */

const SAMPLES: [number, number][] = [
  [122, 402], [128, 520], [138, 680], [142, 708], [147, 710], [150, 680], [153, 580], [155, 500], [159, 470], [164, 458],
  [170, 455], [174, 470], [178, 488], [184, 497], [200, 502], [212, 514], [230, 542], [248, 566], [253, 585], [260, 592],
  [275, 586], [283, 578], [289, 567], [299, 580], [305, 555], [311, 542], [321, 561], [329, 549], [337, 550], [352, 590],
  [360, 630], [368, 658], [378, 674], [390, 670], [402, 674], [414, 686], [422, 680], [434, 697], [444, 672], [452, 697],
  [462, 706], [474, 690], [484, 688], [494, 694], [506, 674], [520, 676], [534, 682], [545, 648], [558, 665], [569, 625],
  [582, 655], [592, 672], [601, 690], [616, 682], [634, 664], [644, 675], [654, 672], [664, 642], [677, 642], [688, 688],
  [698, 684], [712, 657], [724, 685], [736, 650], [743, 638], [756, 646], [770, 656], [780, 685], [790, 726], [803, 732],
  [812, 772], [822, 796], [836, 815], [848, 790], [856, 828], [868, 850], [878, 872], [890, 866], [900, 866], [908, 906],
  [922, 918], [934, 927], [948, 926], [957, 950], [964, 1010], [976, 994], [990, 990], [1004, 986], [1014, 998], [1024, 985],
  [1034, 935], [1041, 920], [1049, 965], [1063, 994], [1074, 984], [1084, 955], [1094, 966], [1110, 964], [1128, 964],
  [1144, 984], [1158, 975], [1167, 1018], [1176, 988], [1187, 1010], [1204, 990], [1221, 967], [1231, 1006], [1241, 975],
  [1256, 986], [1275, 998], [1297, 964], [1307, 1000], [1320, 960], [1338, 960], [1352, 930], [1369, 884], [1382, 902],
  [1400, 896], [1415, 888], [1428, 860], [1440, 824], [1450, 805], [1460, 784], [1474, 772], [1488, 742], [1498, 718],
  [1510, 716], [1522, 702], [1541, 699], [1553, 713], [1563, 702], [1574, 720], [1585, 726], [1597, 722], [1606, 750],
  [1617, 718], [1623, 694], [1632, 726], [1639, 690], [1643, 664], [1659, 660], [1675, 652], [1685, 628], [1695, 652],
  [1704, 628], [1713, 622], [1723, 588], [1734, 580], [1744, 600], [1755, 574], [1767, 592], [1777, 556], [1789, 545],
  [1803, 524], [1814, 500], [1833, 506], [1845, 526], [1859, 530], [1871, 526], [1881, 558], [1893, 540],
];

const POINTS = SAMPLES.map(([x, y]) => [(x - 122) / 2.45, (y - 311) / 2.998]);

const LINE = POINTS.reduce((d, [x, y], i) => {
  if (i === 0) return `M${x.toFixed(1)},${y.toFixed(1)}`;
  const p0 = POINTS[Math.max(i - 2, 0)];
  const p1 = POINTS[i - 1];
  const p3 = POINTS[Math.min(i + 1, POINTS.length - 1)];
  const c = [p1[0] + (x - p0[0]) / 7, p1[1] + (y - p0[1]) / 7, x - (p3[0] - p1[0]) / 7, y - (p3[1] - p1[1]) / 7];
  return `${d}C${c.map((n) => n.toFixed(1)).join(",")},${x.toFixed(1)},${y.toFixed(1)}`;
}, "");

const AREA = `${LINE}V255H0Z`;

function ElevationCard() {
  return (
    <section className={`${CARD} rounded-[42px] p-[39px]`}>
      <div className="flex items-center justify-between leading-[36px] text-[#5f707f]">
        <h2 className="text-[29px] font-semibold tracking-[3px]">ELEVATION</h2>
        <div className="flex items-center gap-7 text-[31px] font-medium">
          <span className="flex items-center gap-7">
            <RangeArrow />
            112m
          </span>
          <span className="flex items-center gap-7 text-[#305cc6]">
            <RangeArrow up />
            126m
          </span>
        </div>
      </div>
      <svg viewBox="0 0 1140 300" className="mt-[18px] block w-full overflow-visible" role="img" aria-label="Elevation over distance">
        <defs>
          <linearGradient id="fill" gradientUnits="userSpaceOnUse" x1="0" y1="30" x2="0" y2="255">
            <stop offset="0" stopColor="#2f5ec8" stopOpacity="0.62" />
            <stop offset="0.5" stopColor="#3a63cc" stopOpacity="0.38" />
            <stop offset="0.85" stopColor="#4f8fce" stopOpacity="0.18" />
            <stop offset="1" stopColor="#5a6fa8" stopOpacity="0.08" />
          </linearGradient>
        </defs>
        <g stroke="#e1eef6" strokeWidth="2">
          {[0, 352, 704, 1056].map((x) => (
            <line key={x} x1={x} x2={x} y1="0" y2="255" />
          ))}
          {[55, 124, 193].map((y) => (
            <line key={y} x1="0" x2="1056" y1={y} y2={y} strokeDasharray="9 9" />
          ))}
        </g>
        <path d={AREA} fill="url(#fill)" />
        <path d={LINE} fill="none" stroke="#305cc6" strokeWidth="6" strokeLinejoin="round" />
        <g fontFamily="Inter, sans-serif" fontSize="27" fill="#637483">
          <text x="1068" y="65">125m</text>
          <text x="1068" y="134">120m</text>
          <text x="1068" y="203">115m</text>
          <text x="12" y="293">0m</text>
          <text x="364" y="293">500m</text>
          <text x="716" y="293">1.0km</text>
        </g>
      </svg>
    </section>
  );
}

export default function App() {
  return (
    <div className="min-h-screen bg-[#fdfdfd] font-[Inter,sans-serif]">
      <Header />
      <main className="mt-[30px] flex flex-col gap-12 px-12 pb-[42px]">
        <ActivityCard />
        <StatGrid />
        <RouteMap />
        <ElevationCard />
      </main>
    </div>
  );
}
